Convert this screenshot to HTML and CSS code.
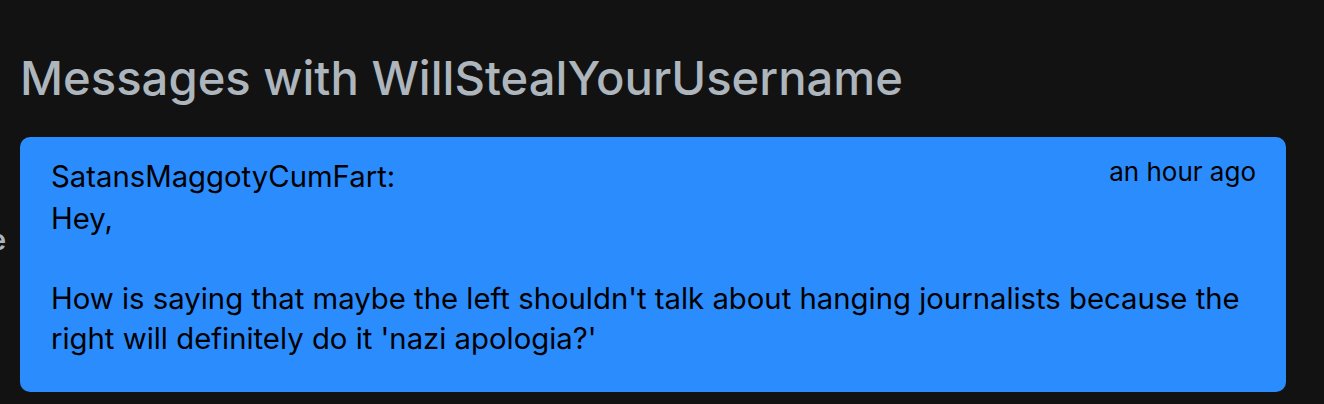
FILE: index.html
```html
<!DOCTYPE html>
<html>
<head>
<meta charset="utf-8">
<link rel="stylesheet" href="styles.css">
</head>
<body>
<div class="page">
  <h1 class="title">Messages with WillStealYourUsername</h1>
  <div class="row">
    <div class="side"><span class="side-text">Home</span></div>
    <div class="card">
      <div class="card-head">
        <span class="author">SatansMaggotyCumFart:</span>
        <span class="time">an hour ago</span>
      </div>
      <div class="body">Hey,

How is saying that maybe the left shouldn't talk about hanging journalists because the right will definitely do it 'nazi apologia?'</div>
    </div>
  </div>
</div>
</body>
</html>
```

FILE: styles.css
```css
html, body {
  margin: 0;
  padding: 0;
  background: #121212;
}
body {
  font-family: Inter, "Liberation Sans", sans-serif;
  color: #000;
}
.page {
  padding-top: 50px;
}
.title {
  margin: 0 0 31px 20px;
  font-size: 47.2px;
  font-weight: 500;
  line-height: 56px;
  color: #adb5bd;
}
.row {
  display: flex;
  gap: 14px;
}
.side {
  width: 6px;
  overflow: hidden;
  display: flex;
  justify-content: flex-end;
  align-items: flex-start;
  padding-top: 86px;
}
.side-text {
  font-size: 28px;
  line-height: 34px;
  font-weight: 600;
  color: #adb5bd;
  white-space: nowrap;
}
.card {
  width: 1266px;
  box-sizing: border-box;
  background: #2b8cfd;
  border-radius: 10px;
  padding: 18px 30px 33px 31px;
}
.card-head {
  display: flex;
  justify-content: space-between;
  align-items: flex-start;
}
.author {
  font-size: 29.3px;
  line-height: 44px;
}
.time {
  font-size: 26px;
  line-height: 34px;
}
.body {
  font-size: 29.3px;
  line-height: 40px;
  white-space: pre-wrap;
}
```
